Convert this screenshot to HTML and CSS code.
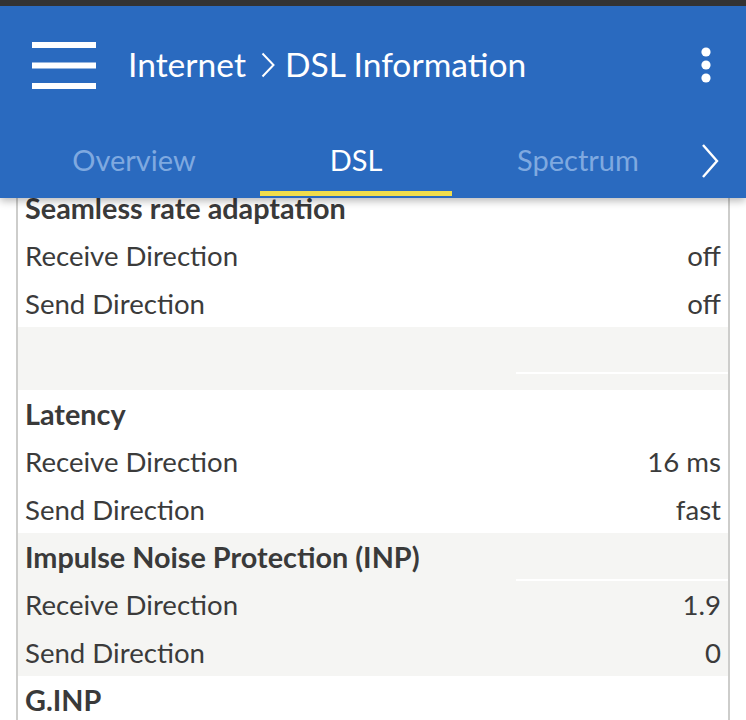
FILE: index.html
```html
<!DOCTYPE html>
<html>
<head>
<meta charset="utf-8">
<link rel="stylesheet" href="styles.css">
</head>
<body>
<header class="header">
  <div class="statusbar"></div>
  <div class="appbar">
    <div class="menu-btn">
      <svg width="64" height="48" viewBox="0 0 64 48"><rect x="0" y="0" width="64" height="6" fill="#fff"/><rect x="0" y="20.5" width="64" height="6" fill="#fff"/><rect x="0" y="41" width="64" height="6" fill="#fff"/></svg>
    </div>
    <h1 class="title">Internet<svg class="crumb" width="14" height="26" viewBox="0 0 14 26"><path d="M1.5 1.5 L12.5 13 L1.5 24.5" fill="none" stroke="#fff" stroke-width="2"/></svg>DSL Information</h1>
    <div class="more">
      <svg width="12" height="40" viewBox="0 0 12 40"><circle cx="6" cy="6" r="4.6" fill="#fff"/><circle cx="6" cy="19" r="4.6" fill="#fff"/><circle cx="6" cy="32" r="4.6" fill="#fff"/></svg>
    </div>
  </div>
  <nav class="tabs">
    <div class="tab">Overview</div>
    <div class="tab active">DSL</div>
    <div class="tab">Spectrum</div>
    <div class="tab-next">
      <svg width="20" height="36" viewBox="0 0 20 36"><path d="M3 2 L17 18 L3 34" fill="none" stroke="#fff" stroke-width="2.4"/></svg>
    </div>
  </nav>
</header>

<main class="card">
  <section class="group white">
    <div class="row head"><span class="label">Seamless rate adaptation</span></div>
    <div class="row"><span class="label">Receive Direction</span><span class="value">off</span></div>
    <div class="row"><span class="label">Send Direction</span><span class="value">off</span></div>
  </section>
  <section class="group grey">
    <div class="row blank split"><span class="label"></span><span class="value"></span></div>
  </section>
  <section class="group white">
    <div class="row head"><span class="label">Latency</span></div>
    <div class="row"><span class="label">Receive Direction</span><span class="value">16 ms</span></div>
    <div class="row"><span class="label">Send Direction</span><span class="value">fast</span></div>
  </section>
  <section class="group grey">
    <div class="row head split"><span class="label">Impulse Noise Protection (INP)</span><span class="value"></span></div>
    <div class="row"><span class="label">Receive Direction</span><span class="value">1.9</span></div>
    <div class="row"><span class="label">Send Direction</span><span class="value">0</span></div>
  </section>
  <section class="group white">
    <div class="row head"><span class="label">G.INP</span></div>
    <div class="row"><span class="label"></span><span class="value"></span></div>
  </section>
</main>
</body>
</html>
```
FILE: styles.css
```css
* { box-sizing: border-box; }
html, body { margin: 0; padding: 0; }
body {
  background: #fff;
  font-family: "Lato", "Open Sans", sans-serif;
  color: #3b3b3b;
  overflow: hidden;
  height: 720px;
}
.header {
  position: relative;
  z-index: 2;
  background: #2a6abf;
  box-shadow: 0 3px 8px rgba(0,0,0,0.28);
}
.statusbar { height: 6px; background: #333333; }
.appbar {
  height: 120px;
  display: flex;
  align-items: center;
  padding-left: 32px;
  padding-right: 34px;
}
.menu-btn { display: flex; align-items: center; width: 64px; height: 48px; }
.menu-btn svg { display: block; }
.title {
  flex: 1;
  margin: 0 0 4px 32px;
  font-weight: 400;
  font-size: 33.6px;
  color: #fff;
  display: flex;
  align-items: center;
}
.crumb { margin: 0 10px 0 15px; display: block; position: relative; top: 1px; }
.more svg { display: block; }
.tabs {
  height: 72px;
  display: flex;
  padding-left: 23px;
  align-items: stretch;
}
.tab {
  width: 222px;
  display: flex;
  align-items: center;
  justify-content: center;
  font-size: 29px;
  color: #7fa9e0;
  padding-bottom: 6px;
  position: relative;
}
.tab.active { color: #fff; }
.tab.active::after {
  content: "";
  position: absolute;
  left: 15px;
  right: 15px;
  bottom: 2px;
  height: 5px;
  background: #f0dd4c;
}
.tab-next {
  flex: 1;
  display: flex;
  align-items: center;
  padding-left: 11px;
  padding-bottom: 2px;
}
.tab-next svg { display: block; }

.card {
  position: relative;
  z-index: 1;
  margin: -14px 16px 0 16px;
  border-left: 2px solid #cdcdcb;
  border-right: 2px solid #cdcdcb;
  background: #fff;
}
.group.white { background: #ffffff; }
.group.grey { background: #f5f5f3; }
.row {
  height: 47.7px;
  display: flex;
  align-items: center;
  justify-content: space-between;
  padding: 0 7px 0 7px;
  font-size: 27.6px;
}
.row.head .label { font-weight: 700; font-size: 28.8px; color: #3a3a3a; }
.row .value { text-align: right; }
.row.blank { height: 63px; }
.row.split { padding-right: 0; align-items: stretch; }
.row.split .label { display: flex; align-items: center; flex: 0 0 491px; }
.row.split .value { flex: 1; border-bottom: 2px solid #ffffff; margin-bottom: 0; }
.row.blank.split .value { margin-bottom: 16px; }
```
